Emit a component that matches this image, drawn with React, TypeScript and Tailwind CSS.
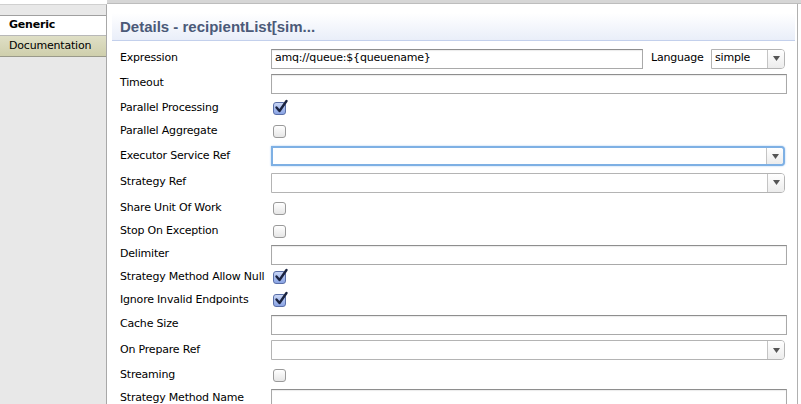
import React from "react";

const font = { fontFamily: '"DejaVu Sans", "Liberation Sans", sans-serif' };

function TextField({ value = "", className = "" }: { value?: string; className?: string }) {
  return (
    <div
      className={`h-[20px] shrink-0 border border-[#a9a9a9] border-t-[#8e8e8e] bg-white flex items-center px-[3px] text-[11px] text-black shadow-[inset_0_1px_1px_rgba(0,0,0,0.08)] ${className}`}
    >
      {value}
    </div>
  );
}

function Combo({ value = "", focused = false, className = "" }: { value?: string; focused?: boolean; className?: string }) {
  return (
    <div
      className={`h-[20px] shrink-0 flex bg-white rounded-r-[4px] ${
        focused
          ? "border-2 border-[#7eb0e4] shadow-[0_0_2px_#9cc4ee]"
          : "border border-[#b4b4b4]"
      } ${className}`}
    >
      <div className="flex-1 flex items-center px-[3px] text-[11px] text-black">{value}</div>
      <div className="w-[17px] border-l border-[#c4c4c4] bg-gradient-to-b from-white to-[#ececec] flex items-center justify-center rounded-r-[3px]">
        <svg width="7" height="5" viewBox="0 0 7 5">
          <path d="M0 0 L7 0 L3.5 5 Z" fill="#555" />
        </svg>
      </div>
    </div>
  );
}

function CheckBox({ checked = false }: { checked?: boolean }) {
  return (
    <div className="relative w-[13px] h-[13px] ml-[2px] shrink-0">
      <div
        className={`w-[13px] h-[13px] rounded-[3px] border ${
          checked
            ? "border-[#5a6fa8] bg-gradient-to-b from-[#c9d6f6] to-[#8aa4e4]"
            : "border-[#9a9a9a] bg-gradient-to-b from-white to-[#e6e6e6]"
        }`}
      />
      {checked && (
        <svg className="absolute left-[1px] top-[-3px]" width="15" height="15" viewBox="0 0 15 15">
          <path d="M2.5 8.5 L5.5 12 L12.5 2" stroke="#1a2340" strokeWidth="2.4" fill="none" strokeLinecap="round" strokeLinejoin="round" />
        </svg>
      )}
    </div>
  );
}

type Row = { label: string; h: number; kind: "text" | "combo" | "check" | "expr"; checked?: boolean; focused?: boolean; value?: string };

const rows: Row[] = [
  { label: "Expression", h: 25, kind: "expr", value: "amq://queue:${queuename}" },
  { label: "Timeout", h: 25, kind: "text" },
  { label: "Parallel Processing", h: 24, kind: "check", checked: true },
  { label: "Parallel Aggregate", h: 23, kind: "check" },
  { label: "Executor Service Ref", h: 26, kind: "combo", focused: true },
  { label: "Strategy Ref", h: 27, kind: "combo" },
  { label: "Share Unit Of Work", h: 24, kind: "check" },
  { label: "Stop On Exception", h: 23, kind: "check" },
  { label: "Delimiter", h: 23, kind: "text" },
  { label: "Strategy Method Allow Null", h: 23, kind: "check", checked: true },
  { label: "Ignore Invalid Endpoints", h: 23, kind: "check", checked: true },
  { label: "Cache Size", h: 25, kind: "text" },
  { label: "On Prepare Ref", h: 26, kind: "combo" },
  { label: "Streaming", h: 24, kind: "check" },
  { label: "Strategy Method Name", h: 23, kind: "text" },
];

export default function App() {
  return (
    <div className="w-[801px] h-[404px] overflow-hidden bg-white flex text-[11px] text-black tracking-[-0.2px]" style={font}>
      {/* Sidebar */}
      <div className="w-[107px] shrink-0 flex flex-col pt-[4px]">
        <div className="flex-1 flex flex-col bg-[#e8e8e8] border-r border-[#a8a8a8] border-t border-t-[#d0d0d0]">
          <div className="h-[11px] shrink-0 border-b border-[#a0a0a0]" />
          <div className="h-[20px] shrink-0 bg-white flex items-center pl-[9px] font-bold border-b border-[#b8b8b8]">Generic</div>
          <div className="h-[21px] shrink-0 bg-gradient-to-b from-[#dfdfc6] to-[#cfcfac] flex items-center pl-[9px] border-b border-[#9a9a8a]">
            Documentation
          </div>
        </div>
      </div>
      {/* Content */}
      <div className="flex-1 flex flex-col overflow-hidden">
        <div className="h-[4px] shrink-0 bg-[#d6d6d6] border-b border-[#bdbdbd] -ml-[4px] border-l border-l-[#bdbdbd]" />
        <div className="flex-1 flex flex-col border-r border-[#b0b0b0] mr-[3px] overflow-hidden">
          <div className="shrink-0 mt-[9px] ml-[5px] mr-[2px] h-[28px] bg-gradient-to-b from-white to-[#e9eef9] border-b border-[#c3d0ec] flex items-center pl-[8px] pt-[1px]">
            <span
              className="font-bold text-[15px] tracking-normal text-[#4b5a78]"
              style={{ fontFamily: '"Liberation Sans", Arial, sans-serif' }}
            >
              Details - recipientList[sim...
            </span>
          </div>
          <div className="flex flex-col mt-[5px] shrink-0">
            {rows.map((r, i) => (
              <div key={i} className="flex items-center pl-[13px] shrink-0" style={{ height: r.h }}>
                <div className="w-[151px] shrink-0">{r.label}</div>
                {r.kind === "expr" && (
                  <div className="flex items-center">
                    <TextField value={r.value} className="w-[372px]" />
                    <span className="ml-[8px] w-[60px]">Language</span>
                    <Combo value="simple" className="w-[74px]" />
                  </div>
                )}
                {r.kind === "text" && <TextField className="w-[516px]" />}
                {r.kind === "combo" && <Combo focused={r.focused} className="w-[514px]" />}
                {r.kind === "check" && <CheckBox checked={r.checked} />}
              </div>
            ))}
          </div>
        </div>
      </div>
    </div>
  );
}
